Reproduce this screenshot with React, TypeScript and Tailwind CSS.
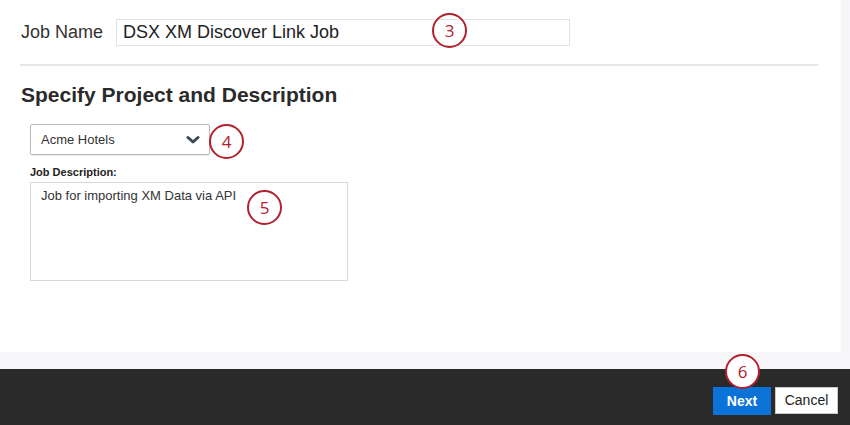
function Marker({ n, className }: { n: number; className: string }) {
  return (
    <div
      className={`absolute w-[35px] h-[35px] rounded-full border-[2.5px] border-[#b3202e] flex items-center justify-center text-[17px] leading-none text-[#b3202e] font-['Open_Sans',sans-serif] ${className}`}
    >
      {n}
    </div>
  );
}

export default function App() {
  return (
    <div className="relative w-[850px] h-[425px] overflow-hidden bg-[#f6f6f8] flex flex-col font-['Liberation_Sans',Arial,sans-serif] text-[#222]">
      <div className="w-[841px] h-[352px] bg-white flex flex-col">
        <div className="flex items-center pl-[21px] pt-[19px]">
          <span className="text-[18px] leading-[27px] text-[#333]">Job Name</span>
          <div className="ml-[13px] w-[454px] h-[27px] border border-[#e2e2e2] flex items-center px-[6px] text-[18px] text-[#222]">
            DSX XM Discover Link Job
          </div>
        </div>

        <div className="mt-[18px] ml-[20px] w-[798px] h-[2px] bg-[#e6e6e6]" />

        <h1 className="mt-[17px] ml-[21px] text-[21px] leading-[24px] font-bold text-[#2a2a2a]">
          Specify Project and Description
        </h1>

        <div className="mt-[17px] ml-[30px] w-[180px] h-[31px] border border-[#b9b9b9] rounded-[2px] flex items-center justify-between pl-[10px] pr-[9px] text-[13px] text-[#333] shadow-[0_1px_1px_rgba(0,0,0,0.08)]">
          <span>Acme Hotels</span>
          <svg width="14" height="10" viewBox="0 0 14 10">
            <path d="M2 2.5 L7 7 L12 2.5" fill="none" stroke="#3b4852" strokeWidth="3" strokeLinecap="round" strokeLinejoin="round" />
          </svg>
        </div>

        <p className="mt-[10px] ml-[30px] text-[11px] leading-[14px] font-bold text-[#222]">Job Description:</p>

        <div className="mt-[3px] ml-[30px] w-[318px] h-[99px] border border-[#d9d9d9] pl-[10px] pt-[5px] text-[13px] leading-[16px] text-[#333]">
          Job for importing XM Data via API
        </div>
      </div>

      <div className="mt-auto h-[56px] bg-[#2a2a2a] flex justify-end items-start gap-[4px] pt-[18px] pr-[12px]">
        <button className="w-[58px] h-[28px] bg-[#0b73d8] text-white text-[14px] font-bold">Next</button>
        <button className="w-[63px] h-[27px] bg-white border border-[#c9c9c9] text-[14px] text-[#222]">Cancel</button>
      </div>

      <Marker n={3} className="left-[432px] top-[13px]" />
      <Marker n={4} className="left-[209px] top-[124px]" />
      <Marker n={5} className="left-[247px] top-[190px]" />
      <Marker n={6} className="left-[725px] top-[354px] bg-white" />
    </div>
  );
}
